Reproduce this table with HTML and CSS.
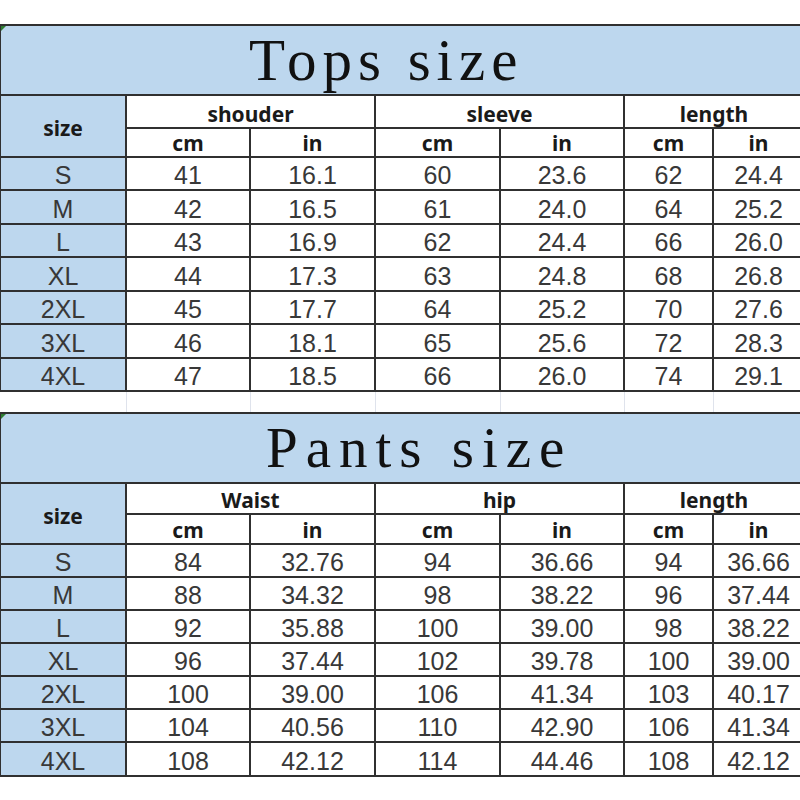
FILE: index.html
```html
<!DOCTYPE html>
<html lang="en">
<head>
<meta charset="utf-8">
<title>Size chart</title>
<link rel="stylesheet" href="styles.css">
</head>
<body>
<div class="sheet">
<table class="grid">
  <colgroup>
    <col class="c-size"><col class="c-a"><col class="c-b"><col class="c-c"><col class="c-d"><col class="c-e"><col class="c-f">
  </colgroup>
  <tbody>
    <tr class="r-title">
      <td colspan="7" class="title title-tops"><span class="corner"></span>Tops size</td>
    </tr>
    <tr class="r-head1">
      <td rowspan="2" class="size head size-head">size</td>
      <td colspan="2" class="head">shouder</td>
      <td colspan="2" class="head">sleeve</td>
      <td colspan="2" class="head">length</td>
    </tr>
    <tr class="r-head2">
      <td class="head">cm</td><td class="head">in</td>
      <td class="head">cm</td><td class="head">in</td>
      <td class="head">cm</td><td class="head">in</td>
    </tr>
    <tr class="r33"><td class="size">S</td><td>41</td><td>16.1</td><td>60</td><td>23.6</td><td>62</td><td>24.4</td></tr>
    <tr class="r34"><td class="size">M</td><td>42</td><td>16.5</td><td>61</td><td>24.0</td><td>64</td><td>25.2</td></tr>
    <tr class="r33"><td class="size">L</td><td>43</td><td>16.9</td><td>62</td><td>24.4</td><td>66</td><td>26.0</td></tr>
    <tr class="r34"><td class="size">XL</td><td>44</td><td>17.3</td><td>63</td><td>24.8</td><td>68</td><td>26.8</td></tr>
    <tr class="r33"><td class="size">2XL</td><td>45</td><td>17.7</td><td>64</td><td>25.2</td><td>70</td><td>27.6</td></tr>
    <tr class="r34"><td class="size">3XL</td><td>46</td><td>18.1</td><td>65</td><td>25.6</td><td>72</td><td>28.3</td></tr>
    <tr class="r33"><td class="size">4XL</td><td>47</td><td>18.5</td><td>66</td><td>26.0</td><td>74</td><td>29.1</td></tr>
    <tr class="r-gap">
      <td class="gap gap-first"></td><td class="gap"></td><td class="gap"></td><td class="gap"></td><td class="gap"></td><td class="gap"></td><td class="gap"></td>
    </tr>
    <tr class="r-title">
      <td colspan="7" class="title title-pants"><span class="corner"></span>Pants size</td>
    </tr>
    <tr class="r-head1b">
      <td rowspan="2" class="size head size-head">size</td>
      <td colspan="2" class="head">Waist</td>
      <td colspan="2" class="head">hip</td>
      <td colspan="2" class="head">length</td>
    </tr>
    <tr class="r-head2b">
      <td class="head">cm</td><td class="head">in</td>
      <td class="head">cm</td><td class="head">in</td>
      <td class="head">cm</td><td class="head">in</td>
    </tr>
    <tr class="r33"><td class="size">S</td><td>84</td><td>32.76</td><td>94</td><td>36.66</td><td>94</td><td>36.66</td></tr>
    <tr class="r33"><td class="size">M</td><td>88</td><td>34.32</td><td>98</td><td>38.22</td><td>96</td><td>37.44</td></tr>
    <tr class="r33"><td class="size">L</td><td>92</td><td>35.88</td><td>100</td><td>39.00</td><td>98</td><td>38.22</td></tr>
    <tr class="r33"><td class="size">XL</td><td>96</td><td>37.44</td><td>102</td><td>39.78</td><td>100</td><td>39.00</td></tr>
    <tr class="r33"><td class="size">2XL</td><td>100</td><td>39.00</td><td>106</td><td>41.34</td><td>103</td><td>40.17</td></tr>
    <tr class="r33"><td class="size">3XL</td><td>104</td><td>40.56</td><td>110</td><td>42.90</td><td>106</td><td>41.34</td></tr>
    <tr class="r34"><td class="size">4XL</td><td>108</td><td>42.12</td><td>114</td><td>44.46</td><td>108</td><td>42.12</td></tr>
  </tbody>
</table>
</div>
</body>
</html>
```
FILE: styles.css
```css
html, body {
  margin: 0;
  padding: 0;
  background: #ffffff;
  overflow: hidden;
}

.sheet {
  padding-top: 24px;
  width: 804px;
}

.grid {
  border-collapse: collapse;
  table-layout: fixed;
  width: 804px;
  margin-left: -1px;
}

.c-size { width: 126px; }
.c-a { width: 124px; }
.c-b { width: 125px; }
.c-c { width: 125px; }
.c-d { width: 124px; }
.c-e { width: 89px; }
.c-f { width: 91px; }

.grid td {
  border: 2px solid #303030;
  padding: 0 0 0 0;
  text-align: center;
  vertical-align: bottom;
  font-family: "Liberation Sans", Arial, sans-serif;
  font-size: 25px;
  line-height: 28px;
  color: #383838;
  overflow: hidden;
  white-space: nowrap;
}

.grid td.size {
  background: #bdd7ee;
}

.grid td.head {
  font-family: "Noto Sans", "Liberation Sans", sans-serif;
  font-weight: bold;
  font-size: 21px;
  line-height: 26px;
  color: #1a1a1a;
}

.grid td.size-head {
  vertical-align: middle;
  padding-top: 4px;
}

.grid td.title {
  position: relative;
  background: #bdd7ee;
  text-align: left;
  vertical-align: middle;
  font-family: "Liberation Serif", "Times New Roman", serif;
  color: #111111;
  line-height: 60px;
}

.grid td.title-tops {
  font-size: 59px;
  letter-spacing: 6px;
  padding: 0 0 0 248px;
}

.grid td.title-pants {
  font-size: 57px;
  letter-spacing: 8px;
  padding: 0 0 0 265px;
}

.corner {
  position: absolute;
  left: 0;
  top: 0;
  width: 0;
  height: 0;
  border-top: 5px solid #2e7d32;
  border-right: 5px solid transparent;
}

.r-title { height: 70px; }
.r-head1 { height: 33px; }
.r-head2 { height: 29px; }
.r-head1b { height: 31px; }
.r-head2b { height: 30px; }
.r33 { height: 33px; }
.r34 { height: 34px; }
.r-gap { height: 22px; }

.grid td.gap {
  border: 1px solid #dfe3ec;
  padding: 0;
}

.grid td.gap-first {
  border-left: 1px solid #ffffff;
}
```
